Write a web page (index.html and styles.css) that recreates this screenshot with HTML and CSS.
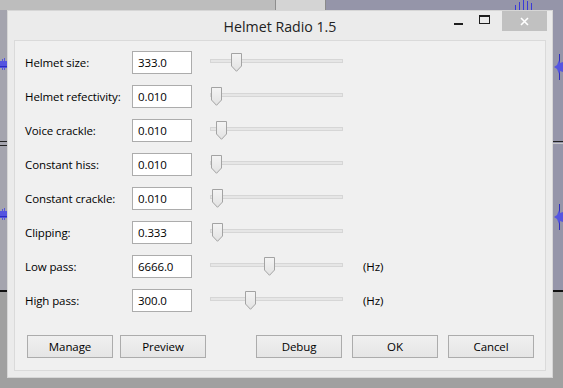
FILE: index.html
```html
<!DOCTYPE html>
<html>
<head>
<meta charset="utf-8">
<link rel="stylesheet" href="styles.css">
</head>
<body>
<div class="desktop">
  <div class="bg bg-left-top"></div>
  <div class="bg bg-mid-top"></div>
  <div class="bg bg-right"></div>
  <div class="bg bg-left"></div>
  <div class="bg bg-bottom"></div>
  <div class="bg line line-l1"></div>
  <div class="bg line line-l2"></div>
  <div class="bg line line-r1"></div>
  <div class="bg line line-r2"></div>
  <svg class="bg wave wave-top" width="24" height="10" viewBox="0 0 24 10"><g stroke="#3a3ad8" stroke-width="1"><line x1="1.5" y1="5" x2="1.5" y2="10"/><line x1="5.5" y1="2" x2="5.5" y2="10"/><line x1="9.5" y1="0" x2="9.5" y2="10"/><line x1="13.5" y1="1" x2="13.5" y2="10"/><line x1="17.5" y1="3" x2="17.5" y2="10"/></g></svg>
  <svg class="bg wave wave-l1" width="7" height="12" viewBox="0 0 7 12"><path d="M0 3h2v-2h1v2h1v-3h1v3h2v7h-2v2h-1v-2h-1v2h-1v-2h-2z" fill="#5555e0"/><path d="M0 8h7v1h-7z" fill="#2c2cc0"/></svg>
  <svg class="bg wave wave-l2" width="7" height="12" viewBox="0 0 7 12"><path d="M0 3h2v-2h1v2h1v-3h1v3h2v7h-2v2h-1v-2h-1v2h-1v-2h-2z" fill="#5555e0"/><path d="M0 8h7v1h-7z" fill="#2c2cc0"/></svg>
  <svg class="bg wave wave-r1" width="9" height="26" viewBox="0 0 9 26"><path d="M5.5 0v26" stroke="#2c2cc0"/><path d="M0 13l3-2 2-5 1 3 3-1v10l-3-1-1 3-2-5z" fill="#5555e0"/></svg>
  <svg class="bg wave wave-r2" width="9" height="26" viewBox="0 0 9 26"><path d="M5.5 0v26" stroke="#2c2cc0"/><path d="M0 13l3-2 2-5 1 3 3-1v10l-3-1-1 3-2-5z" fill="#5555e0"/></svg>

  <div class="dialog">
    <div class="titlebar">
      <div class="title">Helmet Radio 1.5</div>
      <div class="caption-buttons">
        <div class="cap cap-min"><span class="min-bar"></span></div>
        <div class="cap cap-max"><span class="max-box"></span></div>
        <div class="cap cap-close">
          <svg width="9" height="9" viewBox="0 0 9 9"><path d="M1 1L8 8M8 1L1 8" stroke="#ffffff" stroke-width="1.6"/></svg>
        </div>
      </div>
    </div>
    <div class="client">
      <div class="rows">
        <div class="label">Helmet size:</div>
        <div class="field">333.0</div>
        <div class="slider"><div class="track"></div><div class="thumb" style="left:21px"><svg width="11" height="19" viewBox="0 0 11 19"><defs><linearGradient id="g1" x1="0" y1="0" x2="0" y2="1"><stop offset="0" stop-color="#f4f4f4"/><stop offset="1" stop-color="#e2e2e2"/></linearGradient></defs><path d="M0.5 0.5H10.5V13L5.5 18.3L0.5 13Z" fill="url(#g1)" stroke="#a3a3a3"/></svg></div></div>
        <div class="unit"></div>

        <div class="label">Helmet refectivity:</div>
        <div class="field">0.010</div>
        <div class="slider"><div class="track"></div><div class="thumb" style="left:1px"><svg width="11" height="19" viewBox="0 0 11 19"><path d="M0.5 0.5H10.5V13L5.5 18.3L0.5 13Z" fill="url(#g1)" stroke="#a3a3a3"/></svg></div></div>
        <div class="unit"></div>

        <div class="label">Voice crackle:</div>
        <div class="field">0.010</div>
        <div class="slider"><div class="track"></div><div class="thumb" style="left:6px"><svg width="11" height="19" viewBox="0 0 11 19"><path d="M0.5 0.5H10.5V13L5.5 18.3L0.5 13Z" fill="url(#g1)" stroke="#a3a3a3"/></svg></div></div>
        <div class="unit"></div>

        <div class="label">Constant hiss:</div>
        <div class="field">0.010</div>
        <div class="slider"><div class="track"></div><div class="thumb" style="left:1px"><svg width="11" height="19" viewBox="0 0 11 19"><path d="M0.5 0.5H10.5V13L5.5 18.3L0.5 13Z" fill="url(#g1)" stroke="#a3a3a3"/></svg></div></div>
        <div class="unit"></div>

        <div class="label">Constant crackle:</div>
        <div class="field">0.010</div>
        <div class="slider"><div class="track"></div><div class="thumb" style="left:2px"><svg width="11" height="19" viewBox="0 0 11 19"><path d="M0.5 0.5H10.5V13L5.5 18.3L0.5 13Z" fill="url(#g1)" stroke="#a3a3a3"/></svg></div></div>
        <div class="unit"></div>

        <div class="label">Clipping:</div>
        <div class="field">0.333</div>
        <div class="slider"><div class="track"></div><div class="thumb" style="left:2px"><svg width="11" height="19" viewBox="0 0 11 19"><path d="M0.5 0.5H10.5V13L5.5 18.3L0.5 13Z" fill="url(#g1)" stroke="#a3a3a3"/></svg></div></div>
        <div class="unit"></div>

        <div class="label">Low pass:</div>
        <div class="field">6666.0</div>
        <div class="slider"><div class="track"></div><div class="thumb" style="left:54px"><svg width="11" height="19" viewBox="0 0 11 19"><path d="M0.5 0.5H10.5V13L5.5 18.3L0.5 13Z" fill="url(#g1)" stroke="#a3a3a3"/></svg></div></div>
        <div class="unit">(Hz)</div>

        <div class="label">High pass:</div>
        <div class="field">300.0</div>
        <div class="slider"><div class="track"></div><div class="thumb" style="left:35px"><svg width="11" height="19" viewBox="0 0 11 19"><path d="M0.5 0.5H10.5V13L5.5 18.3L0.5 13Z" fill="url(#g1)" stroke="#a3a3a3"/></svg></div></div>
        <div class="unit">(Hz)</div>
      </div>
      <div class="buttons">
        <div class="btn-group left-group">
          <div class="btn">Manage</div>
          <div class="btn">Preview</div>
        </div>
        <div class="btn-group right-group">
          <div class="btn">Debug</div>
          <div class="btn">OK</div>
          <div class="btn">Cancel</div>
        </div>
      </div>
    </div>
  </div>
</div>
</body>
</html>
```
FILE: styles.css
```css
html, body {
  margin: 0;
  padding: 0;
}
body {
  width: 563px;
  height: 388px;
  overflow: hidden;
  font-family: "Open Sans", "Noto Sans", sans-serif;
}
.desktop {
  position: relative;
  width: 563px;
  height: 388px;
  background: #a0a0a0;
  overflow: hidden;
}
.bg { position: absolute; }
.bg-left-top { left: 0; top: 0; width: 275px; height: 10px; background: #bdbdbd; border-right: 1px solid #8e8e8e; }
.bg-mid-top { left: 276px; top: 0; width: 49px; height: 10px; background: #d4d4d4; border-right: 1px solid #8a8a8a; }
.bg-right { left: 326px; top: 0; width: 237px; height: 290px; background: #9595a9; }
.bg-left { left: 0; top: 10px; width: 8px; height: 280px; background: #a4a4ae; }
.bg-bottom { left: 0; top: 290px; width: 563px; height: 2px; background: #111111; }
.line { height: 1px; }
.line-l1 { left: 0; top: 141px; width: 8px; background: #222; }
.line-l2 { left: 0; top: 145px; width: 8px; background: #222; }
.line-r1 { left: 553px; top: 141px; width: 10px; background: #222; }
.line-r2 { left: 553px; top: 143px; width: 10px; background: #c8c8c8; }
.wave-top { left: 514px; top: 0; }
.wave-l1 { left: 0; top: 58px; }
.wave-l2 { left: 0; top: 208px; }
.wave-r1 { left: 554px; top: 54px; }
.wave-r2 { left: 554px; top: 204px; }

.dialog {
  position: absolute;
  left: 7px;
  top: 10px;
  width: 546px;
  height: 368px;
  box-sizing: border-box;
  background: #ebebeb;
  border: 1px solid #d6d6d6;
  display: flex;
  flex-direction: column;
}
.titlebar {
  position: relative;
  height: 29px;
  display: flex;
  align-items: center;
  justify-content: center;
}
.title {
  font-size: 14.2px;
  color: #222;
  margin-top: 1px;
}
.caption-buttons {
  position: absolute;
  right: 5px;
  top: 0;
  display: flex;
  align-items: flex-start;
}
.cap {
  height: 20px;
  display: flex;
  align-items: center;
  justify-content: center;
}
.cap-min { width: 26px; }
.cap-max { width: 26px; margin-right: 5px; }
.cap-close { width: 45px; background: #c1c1c1; }
.min-bar { width: 9px; height: 2px; background: #1e1e1e; margin-top: 5px; }
.max-box {
  width: 9px; height: 6px;
  border: 1px solid #1e1e1e; border-top-width: 2px;
  margin-top: -3px;
}

.client {
  margin: 0 6px 6px 6px;
  flex: 1;
  background: #f0f0f0;
  border: 1px solid #dadada;
  padding: 10px 11px 11px 10px;
  display: flex;
  flex-direction: column;
  font-size: 11.5px;
  letter-spacing: -0.1px;
  color: #000;
}
.rows {
  display: grid;
  grid-template-columns: 107px 60px 151px auto;
  column-gap: 0;
  row-gap: 11px;
  grid-auto-rows: 23px;
}
.label {
  display: flex;
  align-items: center;
  white-space: nowrap;
}
.field {
  box-sizing: border-box;
  height: 23px;
  background: #fff;
  border: 1px solid #acacac;
  padding-left: 5px;
  display: flex;
  align-items: center;
}
.slider {
  position: relative;
  margin-left: 18px;
  height: 23px;
}
.track {
  position: absolute;
  left: 0;
  right: 0;
  top: 8px;
  height: 4px;
  box-sizing: border-box;
  background: #e6e6e6;
  border: 1px solid #d6d6d6;
}
.thumb {
  position: absolute;
  top: 2px;
  width: 11px;
  height: 19px;
}
.thumb svg { display: block; }
.unit {
  display: flex;
  align-items: center;
  margin-left: 20px;
}
.buttons {
  margin-top: 23px;
  display: flex;
  justify-content: space-between;
  padding-left: 2px;
}
.btn-group { display: flex; }
.left-group { gap: 7px; }
.right-group { gap: 10px; }
.btn {
  box-sizing: border-box;
  width: 86px;
  height: 23px;
  border: 1px solid #acacac;
  background: linear-gradient(#f0f0f0, #e5e5e5);
  display: flex;
  align-items: center;
  justify-content: center;
}
```
